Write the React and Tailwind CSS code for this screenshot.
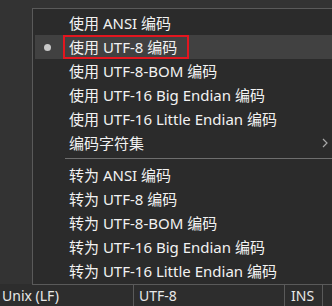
import React from "react";

const useItems = [
  "使用 ANSI 编码",
  "使用 UTF-8 编码",
  "使用 UTF-8-BOM 编码",
  "使用 UTF-16 Big Endian 编码",
  "使用 UTF-16 Little Endian 编码",
];

const toItems = [
  "转为 ANSI 编码",
  "转为 UTF-8 编码",
  "转为 UTF-8-BOM 编码",
  "转为 UTF-16 Big Endian 编码",
  "转为 UTF-16 Little Endian 编码",
];

function Row({ label, checked, active, boxed, submenu }) {
  return (
    <div
      className={
        "relative flex h-6 items-center pr-[11px] " +
        (active ? "bg-[#414141]" : "")
      }
    >
      <div className="flex w-[34px] shrink-0 items-center pl-[9px]">
        {checked && <span className="h-[7px] w-[7px] rounded-full bg-[#c8c8c8]" />}
      </div>
      <span className="whitespace-nowrap">{label}</span>
      {submenu && (
        <svg className="ml-auto" width="6" height="10" viewBox="0 0 6 10">
          <polyline points="1,1 5,5 1,9" fill="none" stroke="#a8a8a8" strokeWidth="1.2" />
        </svg>
      )}
      {boxed && (
        <div className="absolute left-[28px] top-0 h-6 w-[126px] border-2 border-[#e3161f]" />
      )}
    </div>
  );
}

export default function App() {
  return (
    <div className="relative flex h-[306px] w-[332px] flex-col overflow-hidden bg-[#333333] font-['Noto_Sans','Noto_Sans_CJK_SC',sans-serif] text-[15px] text-[#f2f2f2]">
      <div className="flex-1" />

      {/* status bar */}
      <div className="flex h-[22px] items-center bg-[#2d2d2d] text-[14px] text-[#e8e8e8]">
        <div className="w-[133px] pl-[2px]">Unix (LF)</div>
        <div className="h-full w-px bg-[#5a5a5a]" />
        <div className="w-[150px] pl-[5px]">UTF-8</div>
        <div className="h-full w-px bg-[#5a5a5a]" />
        <div className="w-[37px] pl-[6px]">INS</div>
        <div className="h-full w-px bg-[#5a5a5a]" />
      </div>

      {/* encoding menu */}
      <div className="absolute left-[32px] top-[8px] w-[310px] border border-[#5a5a5a] bg-[#2b2b2b] px-[2px] pt-[2px] pb-[1px]">
        {useItems.map((t, i) => (
          <Row key={t} label={t} checked={i === 1} active={i === 1} boxed={i === 1} />
        ))}
        <Row label="编码字符集" submenu />
        <div className="h-2 pl-[30px] pt-[3px]">
          <div className="h-px bg-[#6e6e6e]" />
        </div>
        {toItems.map((t) => (
          <Row key={t} label={t} />
        ))}
      </div>
    </div>
  );
}
